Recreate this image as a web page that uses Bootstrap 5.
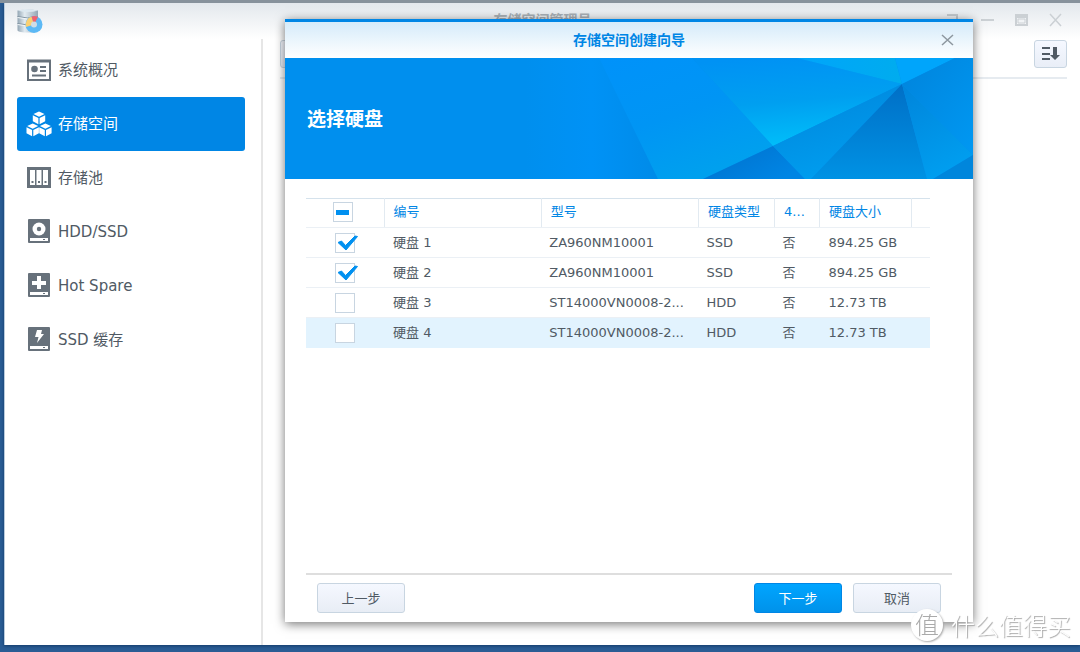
<!DOCTYPE html>
<html lang="zh-CN">
<head>
<meta charset="utf-8">
<meta name="viewport" content="width=device-width, initial-scale=1">
<title>存储空间管理员</title>
<link href="https://cdn.jsdelivr.net/npm/bootstrap@5.3.0/dist/css/bootstrap.min.css" rel="stylesheet">
<style>
  body {
    font-family: "DejaVu Sans", "Noto Sans CJK SC", sans-serif;
    font-size: 13px;
    line-height: 20px;
    color: #505a64;
    background: #2a5c94;
    border-top: 3px solid #87929c;
  }
  .app-window { background: #fff; margin: 0 0 7px 4px; border-left: 1px solid #b9cbdd; box-shadow: 0 1px 3px #123a68; }
  .title-bar { height: 36px; padding-bottom: 2px; background: linear-gradient(#e3e8ed, #fff); }
  .app-title { left: 0; right: 0; font-size: 14px; font-weight: 700; color: #a9b0b6; }
  .title-bar button, .wizard-close { border: 0; background: none; padding: 0; line-height: 0; }
  .side { width: 258px; padding: 4px 16px 0 12px; border-right: 2px solid #e6e6e6; }
  .side .nav-link {
    display: flex; align-items: center; gap: 6px; height: 54px; padding: 0 9px;
    font-size: 15px; color: #505a64; border-radius: 3px;
  }
  .side .nav-link.active { background: #0086e5; color: #fff; }
  .side svg { flex: none; }
  .tool-row { margin: 0 13px 0 17px; padding: 1px 0 9px; border-bottom: 2px solid #e6ebf0; }
  .tool-btn { width: 33px; height: 28px; padding: 0; line-height: 0; background: linear-gradient(#f5f8ff, #e9eef7); border: 1px solid #c8d5e1; border-radius: 3px; }

  .wizard { top: 16px; right: 107px; bottom: 23px; left: 280px; background: #fff; border-top: 3px solid #0086e5; box-shadow: 0 2px 10px rgba(0,0,0,.55); }
  .wizard-head { height: 36px; background: linear-gradient(#d5ebfa, #fff); }
  .wizard-head h1 { font-size: 14px; line-height: 20px; font-weight: 700; color: #0086e5; }
  .wizard-close { right: 19px; top: 11px; }
  .banner { height: 121px; background: #008fee; }
  .banner h2 { font-size: 19px; line-height: 28px; font-weight: 700; color: #fff; padding-left: 22px; }
  .banner svg { top: 0; right: 0; width: 448px; height: 100%; }

  .disk-area { padding: 19px 43px 0 21px; }
  .disks { table-layout: fixed; width: 100%; border-top: 1px solid #d5e2ec; }
  .disks th, .disks td { height: 30px; padding: 0 8px; border-bottom: 1px solid #ebf0f5; white-space: nowrap; overflow: hidden; }
  .disks th { height: 29px; padding-bottom: 2px; padding-left: 9px; font-weight: 400; color: #0086e5; border-left: 1px solid #e2eaf1; }
  .disks th:first-child { border-left: 0; padding: 0 4px 2px 0; }
  .disks td:nth-child(2), .disks td:nth-child(6) { padding-left: 9px; }
  .disks td:first-child { padding: 0; }
  .disks tr.hover-row td { background: #e2f3fe; border-color: #e2f3fe; }
  .tick { appearance: none; display: block; width: 20px; height: 20px; margin: 0 auto; border: 1px solid #c8d5e1; border-radius: 0; background: #fff center no-repeat; }
  .tick:indeterminate { background-image: linear-gradient(#0090f0, #0090f0); background-size: 13px 5px; }
  .tick-mark { top: 0; left: 0; pointer-events: none; }
  .tick-box { width: 20px; margin: 0 auto; }
  .wizard-foot { margin: 0 21px; padding: 8px 11px 9px; border-top: 2px solid #dedede; }
  .wbtn { width: 88px; height: 30px; padding: 2px 0 0; font-size: 13px; line-height: 20px; color: #505a64; border: 1px solid #c8d5e1; border-radius: 3px; background: linear-gradient(#f5f8ff, #e8edf5); }
  .wbtn-go { margin-right: 11px; color: #fff; border-color: #0086e5; background: linear-gradient(#00a5ff, #0092ea); }
  .wbtn:hover { color: #202a34; }
  .wbtn-go:hover { color: #fff; }
  .site-mark { right: 9px; bottom: 10px; font-size: 24px; line-height: 34px; color: #fff; font-family: "Noto Sans CJK SC", sans-serif; font-weight: 300; text-shadow: 1px 1px 1px #a8a8a8; }
  .site-seal { width: 32px; height: 32px; border-radius: 50%; background: #fff; color: #aaa; font-size: 24px; line-height: 30px; text-align: center; box-shadow: 1px 1px 2px #aaa; text-shadow: none; }
</style>
</head>
<body class="d-flex flex-column min-vh-100">
<main class="app-window position-relative flex-grow-1 d-flex flex-column">
  <header class="title-bar d-flex align-items-center justify-content-between position-relative">
    <div class="app-title position-absolute text-center">存储空间管理员</div>
    <svg class="ms-2 flex-shrink-0" width="34" height="32" viewBox="0 0 34 32" aria-hidden="true">
      <defs><linearGradient id="cyl"><stop offset="0" stop-color="#93a6b4"/><stop offset=".35" stop-color="#e2ebf1"/><stop offset="1" stop-color="#93a6b4"/></linearGradient></defs>
      <path d="M4.500 6.500q10-2 20.500 0v20q-1 2-10 2t-10.500-2z" fill="url(#cyl)"/>
      <path d="M4.500 6.500q10-2 20.500 0q-10 3-20.500 0z" fill="#dce8f0"/>
      <path d="M4.500 12.500q10 3 20.500 0M4.500 19.500q10 3 20.500 0" fill="none" stroke="#8295a3" stroke-width="1"/>
      <path d="M4.500 13.500q10 3 20.500 0M4.500 20.500q10 3 20.500 0" fill="none" stroke="#f0f5f8" stroke-width="1"/>
      <circle cx="21" cy="20.500" r="8.500" fill="#5cb9f5"/>
      <path d="M21 20.500L18.500 12.500A8.500 8.500 0 0 0 13 23z" fill="#fad071"/>
      <path d="M21 20.500L18.500 12.500A8.500 8.500 0 0 1 25 13z" fill="#f0626e"/>
      <circle cx="21" cy="20.500" r="3" fill="#cfdde6"/>
    </svg>
    <div class="position-relative d-flex gap-3 me-3">
      <button type="button" aria-label="帮助"><svg width="18" height="14" fill="none" stroke="#c5cacf" stroke-width="2"><path d="M3 2h10v5H8v3M8 12v2"/></svg></button>
      <button type="button" aria-label="最小化"><svg width="18" height="14" stroke="#cbd0d4" stroke-width="2"><path d="M3 7h13"/></svg></button>
      <button type="button" aria-label="最大化"><svg width="18" height="14" fill="none" stroke="#cbd0d4" stroke-width="2"><path d="M4 2h11v10H4zM3 4h13"/><path d="M6 6h7v4H6z" stroke-width="1"/></svg></button>
      <button type="button" aria-label="关闭"><svg width="18" height="14" stroke="#cbd0d4" stroke-width="1.500"><path d="M4 1l11 12M15 1L4 13"/></svg></button>
    </div>
  </header>

  <div class="d-flex flex-grow-1">
    <nav class="side nav flex-column flex-nowrap flex-shrink-0" aria-label="存储">
      <a class="nav-link" href="#"><svg width="26" height="26" viewBox="0 0 26 26" fill="none" stroke="#67717b" stroke-width="2"><path d="M2 4h22v19H2z"/><path d="M1 4h24" stroke-width="3"/><circle cx="8.500" cy="12" r="3.300" fill="#67717b" stroke="none"/><path d="M14 10h6M14 14h6M6 18.500h14"/></svg>系统概况</a>
      <a class="nav-link active" href="#" aria-current="page"><svg width="26" height="26" viewBox="0 0 26 26"><defs><g id="cube"><path d="M6.200 0l5.500 2.500-5.500 2.700-5.500-2.700z"/><path d="M0 3.700l5.600 2.800v6.200L0 9.800zM12.400 3.700L6.800 6.500v6.200l5.600-2.900z"/></g></defs><g fill="#fff"><use href="#cube" x="6.800" y="0.500"/><use href="#cube" x="0.500" y="12.500"/><use href="#cube" x="13.200" y="12.500"/></g></svg>存储空间</a>
      <a class="nav-link" href="#"><svg width="26" height="26" viewBox="0 0 26 26"><path fill="#67717b" d="M1 2h24v21H1z"/><path fill="#fff" d="M4 5h5v15H4zM10.500 5h5v15h-5zM17 5h5v15h-5z"/><path fill="#67717b" d="M5.500 16h2v2h-2zM12 16h2v2h-2zM18.500 16h2v2h-2z"/></svg>存储池</a>
      <a class="nav-link" href="#"><svg width="26" height="26" viewBox="0 0 26 26"><rect x="2" y="0" width="22" height="24" rx="1" fill="#67717b"/><circle cx="13" cy="10" r="6.500" fill="#fff"/><circle cx="13" cy="10" r="2.200" fill="#67717b"/><path fill="#fff" d="M4 19h18v3H4z"/><path fill="#67717b" d="M17 20h2v1h-2z"/></svg>HDD/SSD</a>
      <a class="nav-link" href="#"><svg width="26" height="26" viewBox="0 0 26 26"><rect x="2" y="0" width="22" height="24" rx="1" fill="#67717b"/><path fill="#fff" d="M11 3h4v5h5v4h-5v4h-4v-4H6V8h5zM4 19h18v3H4z"/><path fill="#67717b" d="M17 20h2v1h-2z"/></svg>Hot Spare</a>
      <a class="nav-link" href="#"><svg width="26" height="26" viewBox="0 0 26 26"><rect x="2" y="0" width="22" height="24" rx="1" fill="#67717b"/><path fill="#fff" d="M11 3h5l-1 4h3L11 16l1.500-6H9zM4 19h18v3H4z"/><path fill="#67717b" d="M17 20h2v1h-2z"/></svg>SSD 缓存</a>
    </nav>
    <section class="flex-grow-1">
      <div class="tool-row d-flex justify-content-between">
        <button type="button" class="tool-btn" aria-label="创建"></button>
        <button type="button" class="tool-btn" aria-label="排序"><svg width="20" height="16" viewBox="0 0 20 16" fill="#505a64"><path d="M1 1h8v2H1zM1 7h8v2H1zM1 12h8v2H1zM12 1h4v8h3l-5 5-5-5h3z"/></svg></button>
      </div>
    </section>
  </div>

  <section class="wizard position-absolute d-flex flex-column" role="dialog" aria-labelledby="wizard-title">
    <header class="wizard-head d-flex align-items-center justify-content-center position-relative flex-shrink-0">
      <h1 class="m-0" id="wizard-title">存储空间创建向导</h1>
      <button type="button" class="wizard-close position-absolute" aria-label="关闭"><svg width="14" height="14" stroke="#8d979f" stroke-width="1.500"><path d="M2 2l11 10M13 2L2 12"/></svg></button>
    </header>
    <div class="banner position-relative d-flex align-items-center flex-shrink-0">
      <svg class="position-absolute" viewBox="0 0 448 121" preserveAspectRatio="xMaxYMid slice" aria-hidden="true">
        <defs>
          <linearGradient id="g0" x1="0" y1="0" x2="1" y2="0"><stop offset="0" stop-color="#008fee"/><stop offset=".5" stop-color="#0092f6"/><stop offset="1" stop-color="#008be8"/></linearGradient>
          <linearGradient id="g1" x1="0" y1="0" x2=".5" y2="1"><stop offset="0" stop-color="#0092fa"/><stop offset=".55" stop-color="#0095f4"/><stop offset="1" stop-color="#00a0ee"/></linearGradient>
          <linearGradient id="g2" x1=".3" y1="0" x2=".5" y2="1"><stop offset="0" stop-color="#0092f4"/><stop offset=".5" stop-color="#009ff0"/><stop offset="1" stop-color="#00bffa"/></linearGradient>
          <linearGradient id="g3"><stop offset="0" stop-color="#00a5fb"/><stop offset="1" stop-color="#00acee"/></linearGradient>
          <linearGradient id="g4" x1="0" y1="0" x2="1" y2=".6"><stop offset="0" stop-color="#0070cc"/><stop offset="1" stop-color="#0085e4"/></linearGradient>
          <linearGradient id="g5" x1=".2" y1="0" x2=".6" y2="1"><stop offset="0" stop-color="#0086dc"/><stop offset="1" stop-color="#009ff0"/></linearGradient>
          <linearGradient id="g6" x1="0" y1="0" x2="0" y2="1"><stop offset="0" stop-color="#006fc6"/><stop offset="1" stop-color="#0092e4"/></linearGradient>
          <linearGradient id="g7" x1="0" y1="0" x2="1" y2="1"><stop offset="0" stop-color="#0084dc"/><stop offset="1" stop-color="#0098f2"/></linearGradient>
        </defs>
        <path fill="url(#g0)" d="M0 0h74l60 121H0z"/>
        <path fill="url(#g1)" d="M74 0H167L248 88 178 121H133z"/>
        <path fill="url(#g2)" d="M167 0H272L377 26 248 88z"/>
        <path fill="url(#g3)" d="M272 0H370L377 26z"/>
        <path fill="#00a5fb" d="M370 0H430L377 26z"/>
        <path fill="url(#g4)" d="M178 121L248 88 280 121z"/>
        <path fill="url(#g5)" d="M248 88L377 26 286 121H280z"/>
        <path fill="url(#g6)" d="M286 121L377 26 402 121z"/>
        <path fill="url(#g7)" d="M377 26L430 0H448V97z"/>
        <path fill="url(#g5)" d="M377 26L448 97 408 121H402z"/>
        <path fill="#0086dc" d="M408 121L448 97V121z"/>
      </svg>
      <h2 class="m-0 position-relative">选择硬盘</h2>
    </div>

    <div class="disk-area flex-grow-1">
      <table class="disks">
        <colgroup><col style="width:12.5%"><col style="width:25.2%"><col style="width:25.2%"><col style="width:12.2%"><col style="width:7.2%"><col style="width:14.8%"><col></colgroup>
        <thead>
          <tr><th scope="col"><input class="tick" type="checkbox" id="all" aria-label="全选"></th><th scope="col">编号</th><th scope="col">型号</th><th scope="col">硬盘类型</th><th scope="col">4...</th><th scope="col">硬盘大小</th><th></th></tr>
        </thead>
        <tbody>
          <tr><td><div class="tick-box position-relative"><input class="tick" type="checkbox" checked aria-label="硬盘 1"><svg class="tick-mark position-absolute" width="24" height="20"><path d="M3 9.500l3.500-1.500 4 4.500L20 3l2.500.5L11 17z" fill="#0090f0" stroke="#0090f0"/></svg></div></td><td>硬盘 1</td><td>ZA960NM10001</td><td>SSD</td><td>否</td><td>894.25 GB</td><td></td></tr>
          <tr><td><div class="tick-box position-relative"><input class="tick" type="checkbox" checked aria-label="硬盘 2"><svg class="tick-mark position-absolute" width="24" height="20"><path d="M3 9.500l3.500-1.500 4 4.500L20 3l2.500.5L11 17z" fill="#0090f0" stroke="#0090f0"/></svg></div></td><td>硬盘 2</td><td>ZA960NM10001</td><td>SSD</td><td>否</td><td>894.25 GB</td><td></td></tr>
          <tr><td><input class="tick" type="checkbox" aria-label="硬盘 3"></td><td>硬盘 3</td><td>ST14000VN0008-2...</td><td>HDD</td><td>否</td><td>12.73 TB</td><td></td></tr>
          <tr class="hover-row"><td><input class="tick" type="checkbox" aria-label="硬盘 4"></td><td>硬盘 4</td><td>ST14000VN0008-2...</td><td>HDD</td><td>否</td><td>12.73 TB</td><td></td></tr>
        </tbody>
      </table>
    </div>

    <footer class="wizard-foot d-flex flex-shrink-0">
      <button type="button" class="btn wbtn me-auto">上一步</button>
      <button type="button" class="btn wbtn wbtn-go">下一步</button>
      <button type="button" class="btn wbtn">取消</button>
    </footer>
  </section>
</main>
<div class="site-mark position-fixed d-flex align-items-center gap-2"><span class="site-seal">值</span><span>什么值得买</span></div>
<script src="https://cdn.jsdelivr.net/npm/bootstrap@5.3.0/dist/js/bootstrap.bundle.min.js"></script>
<script>document.getElementById('all').indeterminate = true;</script>
</body>
</html>
